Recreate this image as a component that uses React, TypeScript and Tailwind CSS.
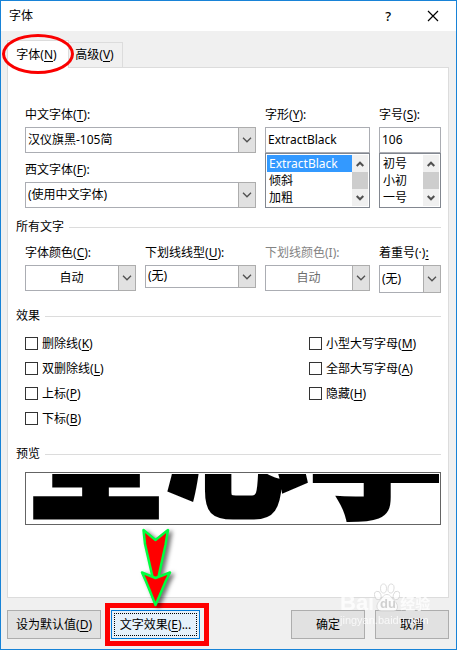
import { useState } from 'react';
import type { ReactNode } from 'react';

interface MnemonicProps {
  text: string;
  letter: string;
  suffix?: string;
}

function Mnemonic({ text, letter, suffix = '' }: MnemonicProps) {
  return (
    <>
      {text}(<u className="underline-offset-2">{letter}</u>){suffix}
    </>
  );
}

interface FieldProps {
  id: string;
  label: ReactNode;
  options: string[];
  height?: string;
  centered?: boolean;
  disabled?: boolean;
}

function SelectField({ id, label, options, height = 'h-[26px]', centered, disabled }: FieldProps) {
  return (
    <div>
      <label htmlFor={id} className={`mb-[4px] block whitespace-nowrap ${disabled ? 'text-[#838383]' : ''}`}>
        {label}
      </label>
      <div className={`relative ${height}`}>
        <select
          id={id}
          disabled={disabled}
          className={`h-full w-full appearance-none border border-[#abadb3] bg-white pr-[18px] pb-px outline-none disabled:text-[#6d6d6d] disabled:opacity-100 ${centered ? 'pl-0 text-center' : 'pl-[2px]'}`}
        >
          {options.map((option) => (
            <option key={option}>{option}</option>
          ))}
        </select>
        <span className="pointer-events-none absolute inset-y-0 right-0 flex w-[18px] items-center justify-center border border-[#adadad] bg-[#e1e1e1]">
          <svg viewBox="0 0 10 6" className="h-[6px] w-[10px]" fill="none" stroke="#505050" strokeWidth="1.3">
            <path d="M1 .8 5 4.8 9 .8" />
          </svg>
        </span>
      </div>
    </div>
  );
}

interface ListFieldProps {
  id: string;
  label: ReactNode;
  initial: string;
  items: string[];
  highlight?: boolean;
}

function ListField({ id, label, initial, items, highlight }: ListFieldProps) {
  const [value, setValue] = useState(initial);

  return (
    <div>
      <label htmlFor={id} className="mb-[4px] block">{label}</label>
      <input
        id={id}
        value={value}
        onChange={(e) => setValue(e.target.value)}
        className="block h-[26px] w-full border border-[#abadb3] bg-white px-[2px] pb-px outline-none"
      />
      <div className="flex h-[55px] border border-[#828790] bg-white p-px">
        <ul role="listbox" className="min-w-0 flex-1 overflow-hidden">
          {items.map((item) => (
            <li
              key={item}
              role="option"
              aria-selected={highlight && item === value}
              onClick={() => setValue(item)}
              className={`h-[17px] px-[2px] leading-[17px] ${highlight && item === value ? 'bg-[#3399ff] text-white' : ''}`}
            >
              {item}
            </li>
          ))}
        </ul>
        <div className="flex w-[16px] flex-col bg-[#f0f0f0]">
          <button type="button" aria-label="向上滚动" className="flex h-[17px] items-center justify-center">
            <svg viewBox="0 0 8 6" className="h-[6px] w-[8px]" fill="none" stroke="#505050" strokeWidth="2">
              <path d="M.7 5 4 1.7 7.3 5" />
            </svg>
          </button>
          <span className="h-[17px] bg-[#cdcdcd]" />
          <button type="button" aria-label="向下滚动" className="flex h-[17px] items-center justify-center">
            <svg viewBox="0 0 8 6" className="h-[6px] w-[8px]" fill="none" stroke="#505050" strokeWidth="2">
              <path d="M.7 1 4 4.3 7.3 1" />
            </svg>
          </button>
        </div>
      </div>
    </div>
  );
}

function SectionTitle({ children }: { children: ReactNode }) {
  return (
    <h2 className="-ml-[9px] flex items-center gap-[5px]">
      {children}
      <span className="h-px flex-1 bg-[#dcdcdc]" />
    </h2>
  );
}

function Check({ text, letter }: { text: string; letter: string }) {
  return (
    <label className="flex h-[25px] items-center gap-[4px]">
      <input type="checkbox" className="h-[13px] w-[13px] appearance-none border border-[#333333] bg-white checked:bg-[#333333]" />
      <span><Mnemonic text={text} letter={letter} /></span>
    </label>
  );
}

function DialogButton({ children, className = '' }: { children: ReactNode; className?: string }) {
  return (
    <button type="button" className={`h-[29px] whitespace-nowrap border border-[#adadad] bg-[#e1e1e1] ${className}`}>
      {children}
    </button>
  );
}

function Arrow() {
  return (
    <svg
      viewBox="0 0 44 88"
      className="pointer-events-none absolute -top-[86px] left-[23px] h-[88px] w-[44px] overflow-visible drop-shadow-[3px_2px_2px_rgba(0,0,0,0.55)]"
      fill="#ff0000"
      stroke="#00ff40"
      strokeWidth="2.5"
      strokeLinejoin="round"
    >
      <path d="M9.5 6 21.5 16 34 6 Q33 12 31.5 21 L24 55 19 55 11 20Z" />
      <path d="M8 48.5 21.5 54 36 48.5 Q31 58 28 66 L21.5 81 15.5 66 Q12 57 8 48.5Z" />
    </svg>
  );
}

function Watermark() {
  return (
    <div className="pointer-events-none absolute -top-[15px] right-[26px] w-[90px] text-white opacity-80">
      <div className="flex h-[30px] items-end">
        <span className="font-['Liberation_Sans'] text-[22px] leading-[20px] font-bold">Bai</span>
        <svg viewBox="0 0 26 30" className="h-[30px] w-[26px] shrink-0" fill="#ffffff" stroke="#c4c4c4" strokeWidth=".7">
          <ellipse cx="3.8" cy="12.5" rx="3.2" ry="4.3" transform="rotate(-15 3.8 12.5)" />
          <ellipse cx="9.5" cy="5.5" rx="3" ry="4.5" />
          <ellipse cx="17" cy="5.500" rx="3" ry="4.5" transform="rotate(8 17 5.5)" />
          <ellipse cx="22.5" cy="12.5" rx="3.2" ry="4.3" transform="rotate(15 22.5 12.5)" />
          <path d="M13 11.5c-4 0-5 4-8 7s-3 9 2 9.500h13c5-.5 4-7 1-9.500s-4-7-8-7Z" />
          <text x="6" y="25" fill="#c9c9c9" stroke="none" fontFamily="Liberation Sans" fontSize="13" fontWeight="bold">du</text>
        </svg>
        <span className="text-[15px] leading-[20px] font-bold whitespace-nowrap">经验</span>
      </div>
      <div className="font-['Liberation_Sans'] text-[11px] leading-[14px]">jingyan.baidu.com</div>
    </div>
  );
}

export default function App() {
  return (
    <main className="border border-[#1883d7] bg-[#f0f0f0] font-['Noto_Sans','Noto_Sans_CJK_SC',sans-serif] text-[12px] leading-[16px] text-black">
      <header className="flex h-[30px] items-center bg-white pr-[17px] pl-[8px]">
        <h1 className="flex-1">字体</h1>
        <button type="button" aria-label="帮助" className="mr-[36px] text-[13px] font-medium">?</button>
        <button type="button" aria-label="关闭">
          <svg viewBox="0 0 12 12" className="h-[12px] w-[12px]" fill="none" stroke="#000000" strokeWidth="1.2">
            <path d="M1 1 11 11M11 1 1 11" />
          </svg>
        </button>
      </header>

      <div className="pr-[7px] pl-[6px] pt-[9px]">
        <nav className="flex items-end">
          <div className="relative z-10 -mb-px">
            <button type="button" className="h-[28px] w-[62px] border border-b-0 border-[#dcdcdc] bg-white pr-[3px]">
              <Mnemonic text="字体" letter="N" />
            </button>
            <span className="pointer-events-none absolute -inset-x-[5px] -inset-y-[6px] rounded-[50%] border-[3px] border-[#fa0000]" />
          </div>
          <button type="button" className="h-[25px] w-[54px] border border-b-0 border-l-0 border-[#dcdcdc] bg-[#f0f0f0] pr-[2px]">
            <Mnemonic text="高级" letter="V" />
          </button>
        </nav>

        <section className="border border-[#dcdcdc] bg-white pt-[39px] pr-[7px] pb-[72px] pl-[17px]">
          <div className="grid grid-cols-[231fr_105fr_62fr] gap-x-[9px]">
            <div className="flex flex-col gap-[9px]">
              <SelectField id="cjk-font" label={<Mnemonic text="中文字体" letter="T" suffix=":" />} options={['汉仪旗黑-105简']} />
              <SelectField id="latin-font" label={<Mnemonic text="西文字体" letter="F" suffix=":" />} options={['(使用中文字体)']} />
            </div>
            <ListField
              id="font-style"
              label={<Mnemonic text="字形" letter="Y" suffix=":" />}
              initial="ExtractBlack"
              items={['ExtractBlack', '倾斜', '加粗']}
              highlight
            />
            <ListField
              id="font-size"
              label={<Mnemonic text="字号" letter="S" suffix=":" />}
              initial="106"
              items={['初号', '小初', '一号']}
            />
          </div>

          <div className="mt-[11px] mb-[10px]">
            <SectionTitle>所有文字</SectionTitle>
          </div>
          <div className="grid grid-cols-[111fr_111fr_105fr_62fr] gap-x-[9px]">
            <SelectField id="font-color" label={<Mnemonic text="字体颜色" letter="C" suffix=":" />} options={['自动']} centered />
            <SelectField id="underline" label={<Mnemonic text="下划线线型" letter="U" suffix=":" />} options={['(无)']} height="h-[23px]" />
            <SelectField id="underline-color" label="下划线颜色(I):" options={['自动']} centered disabled />
            <SelectField id="emphasis" label={<>着重号(·)<u className="underline-offset-2">:</u></>} options={['(无)']} height="h-[28px]" />
          </div>

          <div className="mt-[15px] mb-[7px]">
            <SectionTitle>效果</SectionTitle>
          </div>
          <div className="grid grid-cols-[284fr_132fr]">
            <div>
              <Check text="删除线" letter="K" />
              <Check text="双删除线" letter="L" />
              <Check text="上标" letter="P" />
              <Check text="下标" letter="B" />
            </div>
            <div>
              <Check text="小型大写字母" letter="M" />
              <Check text="全部大写字母" letter="A" />
              <Check text="隐藏" letter="H" />
            </div>
          </div>

          <div className="mt-[15px] mb-[10px]">
            <SectionTitle>预览</SectionTitle>
          </div>
          <div className="h-[53px] border border-[#646464] p-px">
            <div className="flex h-full items-end overflow-hidden">
              <p className="-ml-[2px] pb-[8px] font-['Noto_Sans_CJK_SC'] text-[141px] leading-[141px] font-black whitespace-nowrap [-webkit-text-stroke:5px_#000000]">
                全心字
              </p>
            </div>
          </div>
        </section>
      </div>

      <footer className="relative flex items-center pt-[12px] pr-[7px] pb-[10px] pl-[6px]">
        <DialogButton className="w-[94px]"><Mnemonic text="设为默认值" letter="D" /></DialogButton>
        <div className="relative ml-[10px]">
          <button type="button" className="block h-[29px] w-[89px] border border-[#0078d7] bg-[#e5f1fb] p-[2px]">
            <span className="flex h-full items-center justify-center border border-dotted border-black whitespace-nowrap">
              <Mnemonic text="文字效果" letter="E" suffix="..." />
            </span>
          </button>
          <span className="pointer-events-none absolute -inset-y-[7px] -right-[9px] -left-[6px] border-5 border-[#ff0000]" />
          <Arrow />
        </div>
        <DialogButton className="mr-[10px] ml-auto w-[74px]">确定</DialogButton>
        <DialogButton className="w-[74px]">取消</DialogButton>
        <Watermark />
      </footer>
    </main>
  );
}
